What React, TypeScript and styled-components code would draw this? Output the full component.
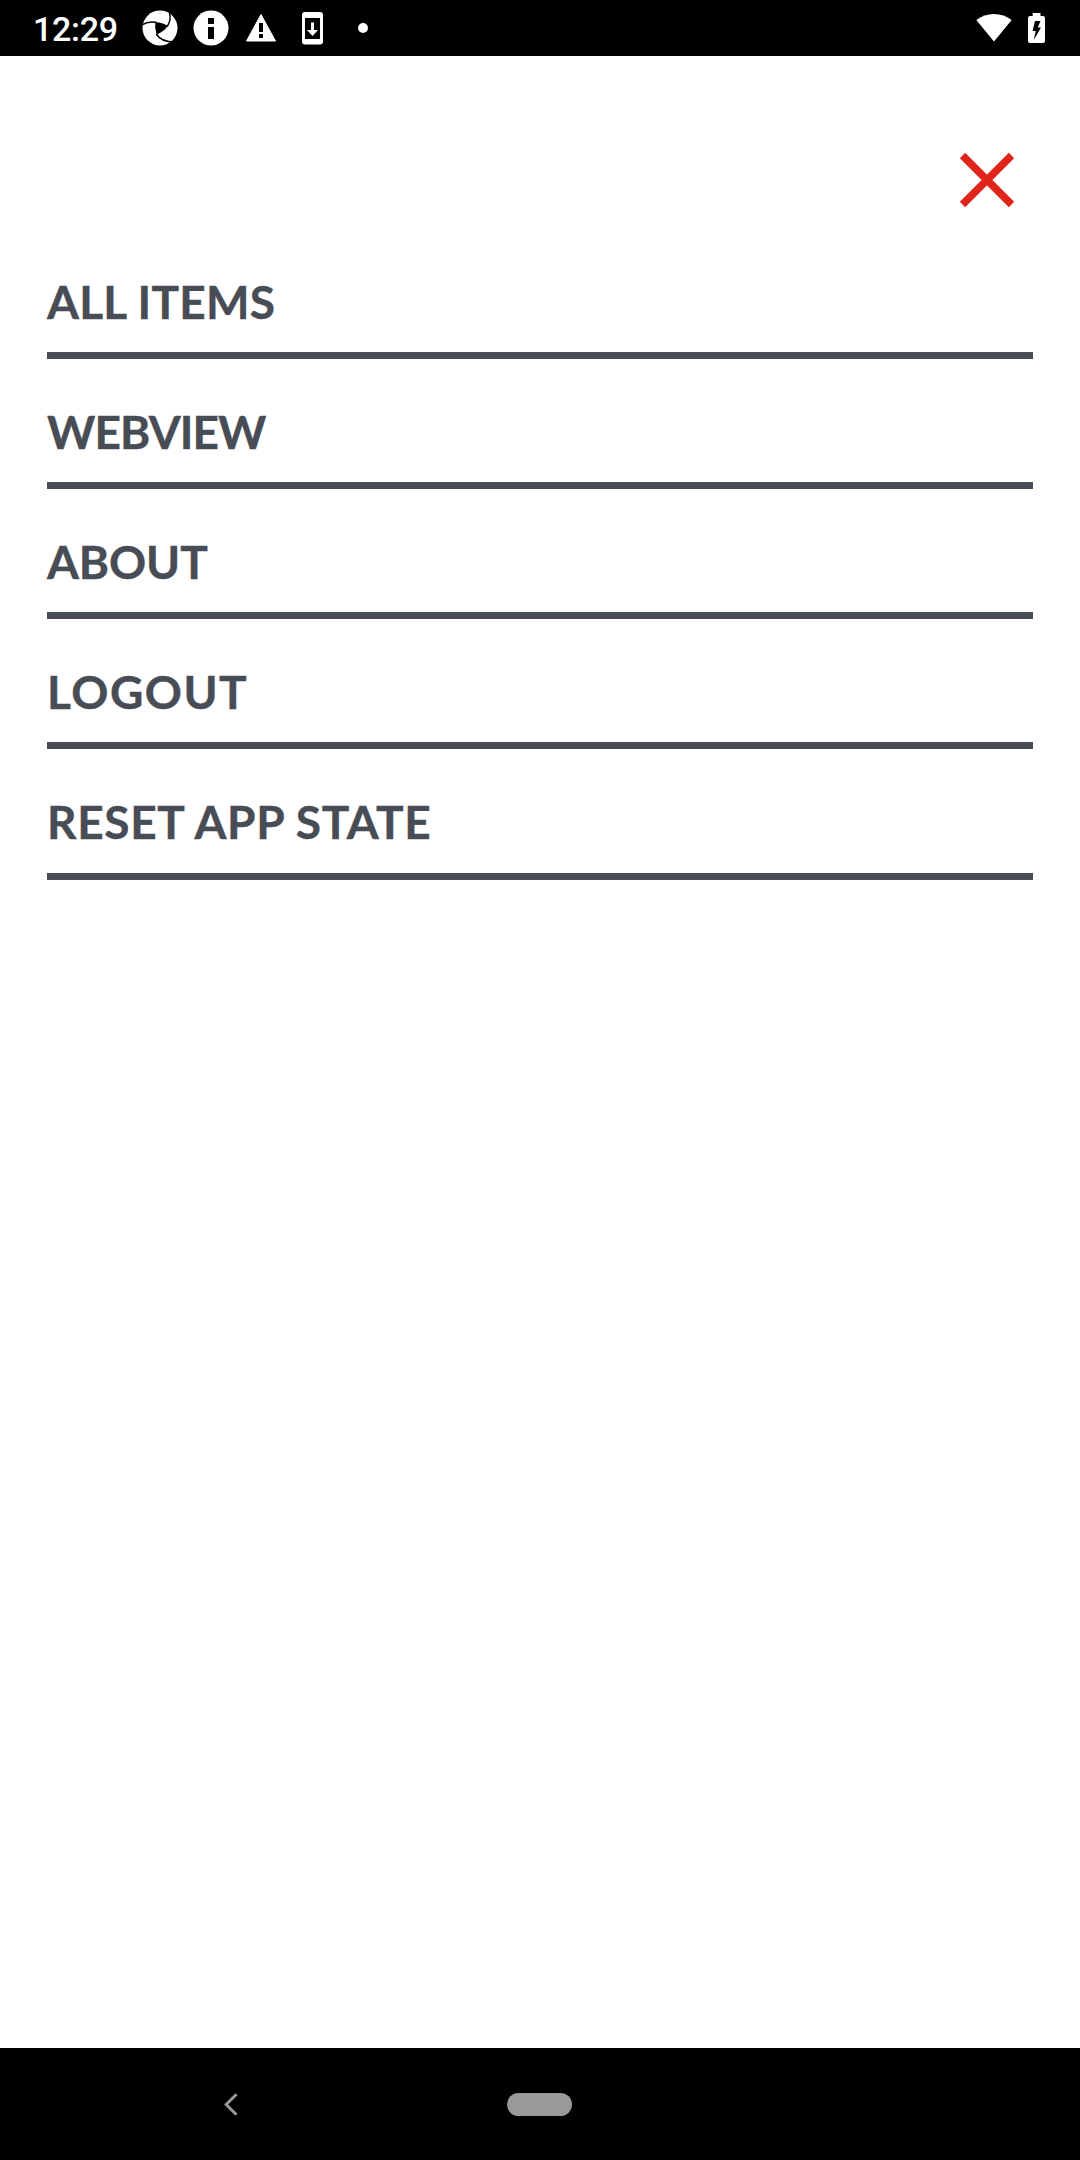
import React from "react";
import styled, { createGlobalStyle } from "styled-components";

const GlobalStyle = createGlobalStyle`
  body {
    margin: 0;
    background: #fff;
  }
`;

const Screen = styled.div`
  display: flex;
  flex-direction: column;
  width: 1080px;
  height: 2160px;
  background: #fff;
  overflow: hidden;
`;

const StatusBar = styled.header`
  display: flex;
  align-items: center;
  justify-content: space-between;
  box-sizing: border-box;
  height: 56px;
  padding: 0 35px 0 33px;
  background: #000;
  flex: none;
`;

const StatusGroup = styled.div<{ $gap: number }>`
  display: flex;
  align-items: center;
  gap: ${({ $gap }) => $gap}px;
`;

const Clock = styled.time`
  width: 92px;
  color: #fff;
  font: 500 34px/56px Roboto, sans-serif;
  letter-spacing: -0.3px;
  padding-top: 2px;
`;

const Icon = styled.svg`
  display: block;
  flex: none;
`;

const Menu = styled.main`
  display: flex;
  flex-direction: column;
  flex: 1;
  padding: 87px 47px 0;
`;

const CloseButton = styled.button`
  align-self: flex-end;
  display: grid;
  place-items: center;
  width: 74px;
  height: 74px;
  margin: 0 9px 12px 0;
  padding: 0;
  border: 0;
  background: none;
`;

const MenuList = styled.ul`
  display: flex;
  flex-direction: column;
  margin: 0;
  padding: 0;
  list-style: none;
`;

const MenuItem = styled.li<{ $spacing: number; $height: number }>`
  box-sizing: border-box;
  height: ${({ $height }) => $height}px;
  padding-top: 45px;
  border-bottom: 7px solid #474c55;
  color: #474c55;
  font: 700 46px/56px Lato, sans-serif;
  -webkit-text-stroke: 0.4px #474c55;
  letter-spacing: ${({ $spacing }) => $spacing}px;
  white-space: nowrap;
`;

const NavBar = styled.footer`
  display: flex;
  align-items: center;
  box-sizing: border-box;
  height: 112px;
  padding: 1px 0 0 224px;
  gap: 269px;
  background: #000;
  flex: none;
`;

const HomePill = styled.div`
  width: 65px;
  height: 23px;
  border-radius: 12px;
  background: #999;
`;

const items = [
  { label: "ALL ITEMS", spacing: 0.25, height: 130 },
  { label: "WEBVIEW", spacing: -0.9, height: 130 },
  { label: "ABOUT", spacing: -0.1, height: 130 },
  { label: "LOGOUT", spacing: 1.5, height: 130 },
  { label: "RESET APP STATE", spacing: 0.65, height: 131 },
];

const ApertureIcon = () => (
  <Icon width="36" height="36" viewBox="0 0 36 36">
    <circle cx="18" cy="18" r="17.5" fill="#fff" />
    <path d="M13.300 12 Q21 12.500 25.700 16 Q21.500 22 14.600 24.500 Q12.500 18 13.300 12Z" fill="#000" />
    <g fill="none" stroke="#000" strokeWidth="1.500">
      <path d="M0 15 Q6 10.800 14 12.300" />
      <path d="M27.500 3 Q29.500 10 25.200 16.500" />
      <path d="M14.300 24 Q19 32 33 32" />
    </g>
  </Icon>
);

const InfoIcon = () => (
  <Icon width="36" height="36" viewBox="0 0 36 36">
    <circle cx="18" cy="18" r="17.5" fill="#fff" />
    <path d="M15 8h6v6h-6zM15 17h6v12h-6z" fill="#000" />
  </Icon>
);

const WarningIcon = () => (
  <Icon width="32" height="36" viewBox="0 0 32 36">
    <path d="M16 4.500 L30.500 31 H1.500Z" fill="#fff" stroke="#fff" strokeLinejoin="round" />
    <path d="M14 13h4v9h-4zM14 24h4v4h-4z" fill="#000" />
  </Icon>
);

const DownloadIcon = () => (
  <Icon width="21" height="36" viewBox="0 0 21 36">
    <rect y="2" width="21" height="32.5" rx="3" fill="#fff" />
    <path d="M3 8h15v21H3z" fill="#000" />
    <path d="M9 12.5h3v7.5h4L10.5 26 5 20h4z" fill="#fff" />
  </Icon>
);

const DotIcon = () => (
  <Icon width="10" height="10" viewBox="0 0 10 10">
    <circle cx="5" cy="5" r="5" fill="#fff" />
  </Icon>
);

const WifiIcon = () => (
  <Icon width="36" height="30" viewBox="0 0 36 30">
    <path d="M18 28.5 L.3 7 Q8 1 18 1 T35.7 7Z" fill="#fff" />
  </Icon>
);

const BatteryIcon = () => (
  <Icon width="17" height="30" viewBox="0 0 17 30">
    <path d="M4.700 0h7.800v3H15q2 0 2 2v23q0 2-2 2H2q-2 0-2-2V5q0-2 2-2h2.700z" fill="#fff" />
    <path d="M7 8h5.500l-2.700 6.500H13L5.800 27 7.700 18H4.500z" fill="#000" />
  </Icon>
);

export default function App() {
  return (
    <Screen>
      <GlobalStyle />
      <StatusBar>
        <StatusGroup $gap={17}>
          <Clock>12:29</Clock>
          <StatusGroup $gap={25}>
            <StatusGroup $gap={16}>
              <StatusGroup $gap={15}>
                <ApertureIcon />
                <InfoIcon />
              </StatusGroup>
              <WarningIcon />
            </StatusGroup>
            <StatusGroup $gap={35}>
              <DownloadIcon />
              <DotIcon />
            </StatusGroup>
          </StatusGroup>
        </StatusGroup>
        <StatusGroup $gap={16}>
          <WifiIcon />
          <BatteryIcon />
        </StatusGroup>
      </StatusBar>
      <Menu>
        <CloseButton aria-label="Close menu">
          <Icon width="56" height="56" viewBox="0 0 56 56">
            <path
              d="M3.500 3.500 52.500 52.500M52.500 3.500 3.500 52.500"
              stroke="#e2231a"
              strokeWidth="7.500"
            />
          </Icon>
        </CloseButton>
        <MenuList>
          {items.map((item) => (
            <MenuItem key={item.label} $spacing={item.spacing} $height={item.height}>
              {item.label}
            </MenuItem>
          ))}
        </MenuList>
      </Menu>
      <NavBar>
        <Icon width="14" height="23" viewBox="0 0 14 23">
          <path d="M12.500 1.200 2.200 11.500 12.500 21.800" fill="none" stroke="#999" strokeWidth="3" />
        </Icon>
        <HomePill />
      </NavBar>
    </Screen>
  );
}
